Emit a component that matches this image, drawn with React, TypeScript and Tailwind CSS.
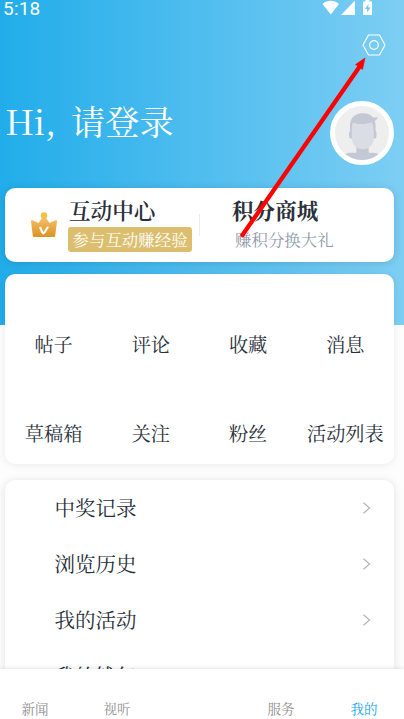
import React from 'react';

const stats = ['帖子', '评论', '收藏', '消息', '草稿箱', '关注', '粉丝', '活动列表'];
const menu = ['中奖记录', '浏览历史', '我的活动', '我的钱包'];
const tabs = ['新闻', '视听', '', '服务', '我的'];

const StatusBar: React.FC = () => (
  <div className="flex h-4 shrink-0 items-start justify-between pl-[3px] pr-[30px] font-['Roboto',sans-serif] text-white">
    <span className="text-[19px] leading-[17px] tracking-[0.2px]">5:18</span>
    <svg width="52" height="16" viewBox="0 0 52 16" fill="currentColor">
      <path d="M0.5 4 C5 -0.2 12.5 -0.2 17 4 L8.8 14.5Z" />
      <path d="M33 0.5V15H19Z" />
      <path d="M41 1.5h2.500V0h4v1.500h2.500v13.500h-9Z" />
      <path d="M46.5 4 43 9h2.2v3.5L48.5 7.500h-2.200Z" fill="#70c8f1" />
    </svg>
  </div>
);

const Avatar: React.FC = () => (
  <div className="h-16 w-16 overflow-hidden rounded-full border-[5.5px] border-white bg-[#eeeeee]">
    <svg className="h-full w-full" viewBox="0 0 53 53">
      <path d="M10.500 53v-6c2-1.500 6-1 10.500-1v-7h12v7c4.500 0 8 0 10 1.500V53Z" fill="#c3c8d4" />
      <path d="M15.500 16h24v14h-24Z" fill="#c3c8d4" />
      <ellipse cx="15.800" cy="28" rx="2" ry="4.200" fill="#c3c8d4" />
      <ellipse cx="38.800" cy="28" rx="2" ry="4.200" fill="#c3c8d4" />
      <path d="M16.500 16h21.500v16c0 6-5 10.500-10.700 10.500S16.500 38 16.500 32Z" fill="#dadde3" />
      <path d="M15 24c-1-9 1-17 13-17 4 0 7 1.500 9 4 1.800.4 3.600.2 5 0-.5 1.800-1.400 3-3 3.600.8 2.400 1 6 .5 9.400l-1.500-.5c0-3-.7-5.500-2-7.500-5 2-13 2.500-18.500.5-1 2-1 5-1 7.500Z" fill="#c3c8d4" />
    </svg>
  </div>
);

const Crown: React.FC = () => (
  <svg width="26" height="26" viewBox="0 0 26 26" className="shrink-0">
    <defs>
      <linearGradient id="crown" x1="0" y1="0" x2="0" y2="1">
        <stop stopColor="#f7bd68" />
        <stop offset="1" stopColor="#d99523" />
      </linearGradient>
    </defs>
    <path d="M0 9c0-1 1-1 2-.4l5.500 2.400 3.500-5h4l3.500 5L24 8.600c1-.6 2-.6 2 .4l-1.800 15c-.1.700-.5 1-1.100 1H2.900c-.6 0-1-.3-1.100-1Z" fill="url(#crown)" />
    <circle cx="13" cy="3.500" r="3.300" fill="#f1c14e" />
    <path d="M9.300 15.800 11.600 20.800c.4.800 1.200.8 1.700 0l3.300-5.300" fill="none" stroke="#fff" strokeWidth="2.100" strokeLinecap="round" />
  </svg>
);

export default function App() {
  return (
    <div className="relative flex h-[719px] w-[404px] flex-col overflow-hidden bg-[#fdfdfd] bg-[linear-gradient(90deg,#21adea,#50bdef_50%,#7dcef3)] bg-[length:100%_325px] bg-no-repeat font-['Noto_Serif_CJK_SC','Noto_Sans_CJK_SC',serif] text-[#29303a]">
      <StatusBar />

      <div className="flex shrink-0 justify-end pr-[18px] pt-[18px]">
        <svg width="24" height="22" viewBox="0 0 24 22" fill="none" stroke="#fff" strokeWidth="1.2">
          <path d="M6.500 1h11L23 11l-5.500 10h-11L1 11Z" strokeLinejoin="round" />
          <circle cx="12" cy="11" r="4.300" />
        </svg>
      </div>

      <div className="mt-[45px] flex h-16 shrink-0 items-start justify-between pl-[5px] pr-2.5 text-white">
        <h1 className="flex h-10 items-center whitespace-nowrap text-[34.200px] leading-10">
          <span className="w-[66px] tracking-[-0.3px]">Hi,</span>
          <span>请登录</span>
        </h1>
        <Avatar />
      </div>

      <section className="ml-[5px] mr-2.5 mt-[23px] flex h-[74px] shrink-0 items-center rounded-[10px] bg-white shadow-[0_1px_9px_rgba(0,0,0,0.14)]">
        <div className="flex h-full w-[194px] items-center pl-[26px]">
          <Crown />
          <div className="ml-[11px] flex h-full flex-col items-start pt-2">
            <h2 className="h-[31px] pl-px text-[21.600px] font-semibold leading-7">互动中心</h2>
            <p className="h-[25px] whitespace-nowrap rounded-[3px] bg-[#dbbe6e] px-[4.500px] text-[16.450px] leading-[24px] text-white">参与互动赚经验</p>
          </div>
        </div>
        <div className="h-[22px] w-px bg-[#ececec]" />
        <div className="flex h-full flex-col pl-[31px] pt-2">
          <h2 className="h-[31px] pl-px text-[21.600px] font-bold leading-7">积分商城</h2>
          <p className="whitespace-nowrap pl-1 text-[16.450px] leading-[24px] text-[#9299ab]">赚积分换大礼</p>
        </div>
      </section>

      <section className="ml-[5px] mr-2.5 mt-3 grid h-[190px] shrink-0 grid-cols-4 grid-rows-[89px_89px] rounded-[10px] bg-white shadow-[0_1px_9px_rgba(0,0,0,0.08)]">
        {stats.map(label => (
          <div key={label} className="flex items-end justify-center whitespace-nowrap pb-[5px] text-[19.200px] leading-7">
            {label}
          </div>
        ))}
      </section>

      <section className="ml-[5px] mr-2.5 mt-4 flex min-h-0 flex-1 flex-col rounded-t-[10px] bg-white shadow-[0_1px_9px_rgba(0,0,0,0.12)]">
        {menu.map(label => (
          <div key={label} className="flex h-14 shrink-0 items-center justify-between pl-[49.500px] pr-[23px] text-[20.500px] leading-7">
            <span className="pb-0.5">{label}</span>
            <svg width="9" height="12" viewBox="0 0 9 12" fill="none" stroke="#b6b6b6" strokeWidth="1.300">
              <path d="M1.500.7 7.500 6l-6 5.300" />
            </svg>
          </div>
        ))}
      </section>

      <nav className="z-10 grid h-[50px] shrink-0 grid-cols-[70px_94px_70px_94px_72px] items-end bg-white pb-px shadow-[0_-1px_4px_rgba(0,0,0,0.1)]">
        {tabs.map((label, i) => (
          <span key={i} className={`h-5 text-center text-[13.500px] leading-5 ${label === '我的' ? 'text-[#20a8e6]' : 'text-[#929292]'}`}>
            {label}
          </span>
        ))}
      </nav>

      <svg className="pointer-events-none absolute left-0 top-0 z-20" width="404" height="260" viewBox="0 0 404 260">
        <path d="M242.500 235 359 67.500" stroke="#fe0000" strokeWidth="4.300" strokeLinecap="round" />
        <path d="M365 58 355.500 64.500 362.500 69.500Z" fill="#fe0000" stroke="#fe0000" strokeWidth="0.600" />
      </svg>
    </div>
  );
}
